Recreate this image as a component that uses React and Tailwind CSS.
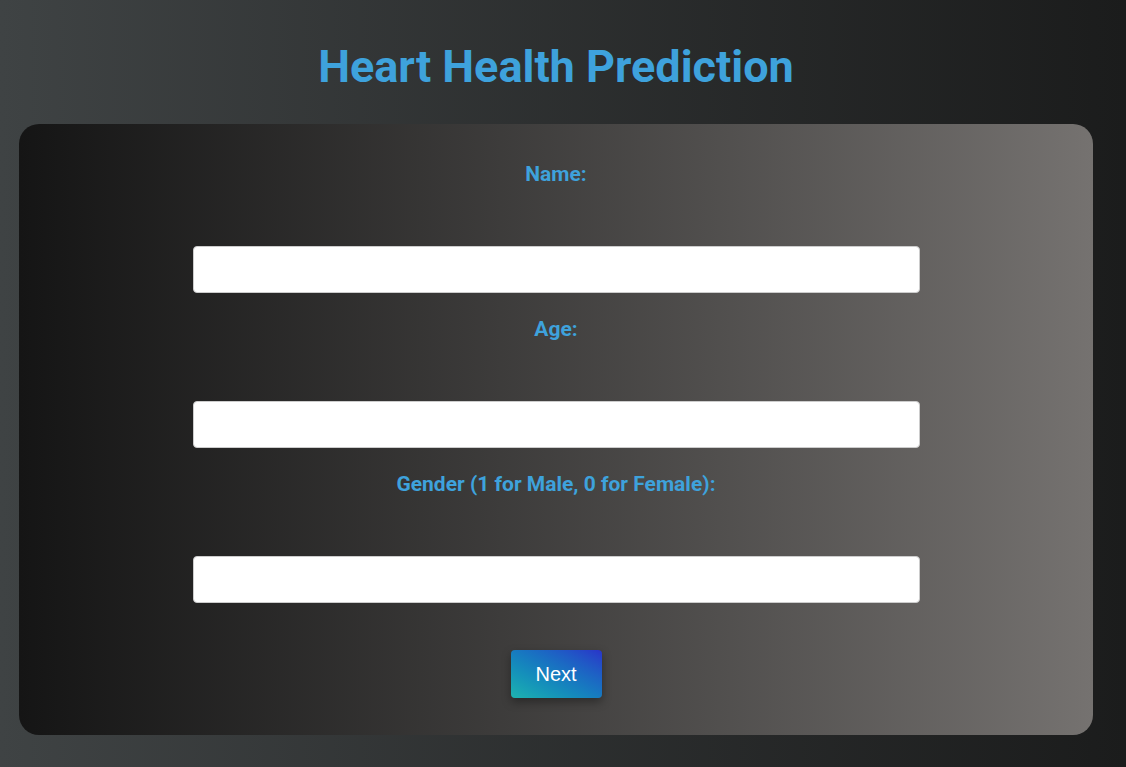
export default function App() {
  const fields = [
    { label: "Name:", type: "text" },
    { label: "Age:", type: "number" },
    { label: "Gender (1 for Male, 0 for Female):", type: "number" },
  ];

  return (
    <div className="min-h-[767px] w-full bg-gradient-to-r from-[#3f4344] to-[#1b1c1c] font-['Roboto',sans-serif]">
      <div className="w-[1112px] pt-[38px] pb-[32px]">
        {/* Title */}
        <h1 className="text-center text-[45px] leading-[58px] font-bold text-[#3ea2dc] mb-[28px]">
          Heart Health Prediction
        </h1>

        {/* Card */}
        <div className="mx-[19px] rounded-[20px] bg-gradient-to-r from-[#151515] to-[#757270] pt-[38px] pb-[37px] flex flex-col items-center">
          {fields.map((f, i) => (
            <div key={i} className="w-[727px] flex flex-col items-center">
              <label className="block text-[21px] leading-[24px] font-bold text-[#3ea2dc] mb-[60px]">
                {f.label}
              </label>
              <input
                type={f.type}
                className="w-full h-[47px] bg-white border border-[#cccccc] rounded-[4px] mb-[24px] px-2 outline-none"
              />
            </div>
          ))}
          <button className="mt-[23px] w-[91px] h-[48px] leading-[46px] rounded-[4px] bg-gradient-to-tr from-[#1fb3ae] to-[#2a32c9] text-white text-[20px] font-['Liberation_Sans',Arial,sans-serif] shadow-[0_4px_10px_rgba(0,0,0,0.35)]">
            Next
          </button>
        </div>
      </div>
    </div>
  );
}
